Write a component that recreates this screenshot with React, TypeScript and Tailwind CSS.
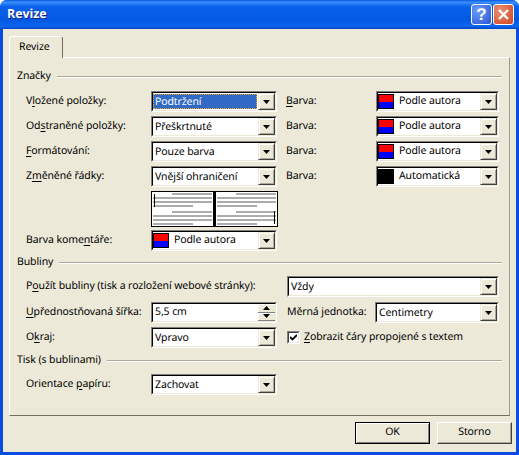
import type { ReactNode } from 'react';

const ArrowButton = () => (
  <div className="w-[17px] h-full flex items-center justify-center bg-[#ece9d8] border border-t-[#ece9d8] border-l-[#ece9d8] border-r-[#404040] border-b-[#404040] shadow-[inset_1px_1px_0_#ffffff,inset_-1px_-1px_0_#aca899]">
    <svg width="7" height="4" viewBox="0 0 7 4" className="block">
      <path d="M0 0h7L3.5 4z" fill="#000" />
    </svg>
  </div>
);

const Field = ({ width, children }: { width: string; children: ReactNode }) => (
  <div className={`${width} h-[21px] shrink-0 flex border border-t-[#808080] border-l-[#808080] border-r-white border-b-white`}>
    <div className="flex-1 min-w-0 flex border border-t-black border-l-black border-r-[#ece9d8] border-b-[#ece9d8] bg-white">
      {children}
    </div>
  </div>
);

const Combo = ({ width, value, focus }: { width: string; value: string; focus?: boolean }) => (
  <Field width={width}>
    <div className="flex-1 min-w-0 pt-px pr-px pb-px">
      <div className={`h-full pl-px leading-[14px] border border-dotted ${focus ? 'bg-[#316ac5] text-white border-[#f5a623]' : 'border-transparent'}`}>
        {value}
      </div>
    </div>
    <ArrowButton />
  </Field>
);

const ColorCombo = ({ width, value, black }: { width: string; value: string; black?: boolean }) => (
  <Field width={width}>
    <div className="flex-1 min-w-0 flex items-center">
      <div className="w-[16px] h-[15px] border border-black flex flex-col shrink-0">
        <div className={`flex-1 ${black ? 'bg-black' : 'bg-[#ff0000]'}`} />
        <div className={`flex-1 ${black ? 'bg-black' : 'bg-[#0000ff]'}`} />
      </div>
      <span className="ml-[5px]">{value}</span>
    </div>
    <ArrowButton />
  </Field>
);

const GroupTitle = ({ title, className }: { title: string; className: string }) => (
  <div className={`flex items-center h-[16px] ${className}`}>
    <span>{title}</span>
    <div className="flex-1 ml-[6px] h-[2px] border-t border-t-[#aca899] border-b border-b-white" />
  </div>
);

const Row = ({ className, children }: { className: string; children: ReactNode }) => (
  <div className={`flex items-center h-[21px] pl-[9px] ${className}`}>{children}</div>
);

const Label = ({ width, before, u, after }: { width: string; before?: string; u?: string; after?: string }) => (
  <div className={`${width} shrink-0 whitespace-nowrap`}>
    {before}
    {u && <span className="underline underline-offset-2">{u}</span>}
    {after}
  </div>
);

const PreviewPane = ({ right }: { right?: boolean }) => (
  <div className="relative flex-1 bg-white px-px pt-px flex flex-col">
    {[0, 1].map((i) => (
      <div key={i} className={`flex flex-col gap-[2px] ${i === 1 ? 'mt-[4px]' : ''}`}>
        <div className="h-[2px] w-[40px] ml-auto bg-[#acacac]" />
        <div className="h-[2px] bg-[#acacac]" />
        <div className="h-[2px] bg-[#acacac]" />
        <div className="h-[2px] w-[40px] bg-[#acacac]" />
      </div>
    ))}
    <div className={`absolute w-[1px] h-[13px] bg-black ${right ? 'right-[2px] bottom-[2px]' : 'left-[2px] top-[2px]'}`} />
  </div>
);

const Revision = () => (
  <>
    <GroupTitle title="Značky" className="" />
    <Row className="mt-[6px]">
      <Label width="w-[125px]" before="V" u="l" after="ožené položky:" />
      <Combo width="w-[126px]" value="Podtržení" focus />
      <Label width="w-[90px] ml-[9px]" u="B" after="arva:" />
      <ColorCombo width="w-[123px]" value="Podle autora" />
    </Row>
    <Row className="mt-[4px]">
      <Label width="w-[125px]" before="Od" u="s" after="traněné položky:" />
      <Combo width="w-[126px]" value="Přeškrtnuté" />
      <Label width="w-[90px] ml-[9px]" before="Barva:" />
      <ColorCombo width="w-[123px]" value="Podle autora" />
    </Row>
    <Row className="mt-[4px]">
      <Label width="w-[125px]" u="F" after="ormátování:" />
      <Combo width="w-[126px]" value="Pouze barva" />
      <Label width="w-[90px] ml-[9px]" before="Barva:" />
      <ColorCombo width="w-[123px]" value="Podle autora" />
    </Row>
    <Row className="mt-[4px]">
      <Label width="w-[125px]" before="Z" u="m" after="ěněné řádky:" />
      <Combo width="w-[126px]" value="Vnější ohraničení" />
      <Label width="w-[90px] ml-[9px]" before="Barva:" />
      <ColorCombo width="w-[123px]" value="Automatická" black />
    </Row>
    <div className="ml-[134px] mt-[4px] w-[127px] h-[36px] bg-black p-px flex gap-[3px]">
      <PreviewPane />
      <PreviewPane right />
    </div>
    <Row className="mt-[3px]">
      <Label width="w-[125px]" before="Barva kome" u="n" after="táře:" />
      <ColorCombo width="w-[126px]" value="Podle autora" />
    </Row>
    <GroupTitle title="Bubliny" className="mt-[4px]" />
    <Row className="mt-[5px]">
      <Label width="w-[261px]" before="P" u="o" after="užít bubliny (tisk a rozložení webové stránky):" />
      <Combo width="w-[212px]" value="Vždy" />
    </Row>
    <Row className="mt-[5px]">
      <Label width="w-[125px]" u="U" after="přednostňovaná šířka:" />
      <Field width="w-[126px]">
        <div className="flex-1 pl-[2px] leading-[16px]">5,5 cm</div>
        <div className="w-[17px] flex flex-col">
          <div className="flex-1 flex items-center justify-center bg-[#ece9d8] border-b border-b-[#808080] shadow-[inset_1px_1px_0_#ffffff]">
            <svg width="7" height="4" viewBox="0 0 7 4"><path d="M3.5 0L7 4H0z" fill="#000" /></svg>
          </div>
          <div className="flex-1 flex items-center justify-center bg-[#ece9d8] border-b border-b-[#808080] shadow-[inset_1px_1px_0_#ffffff]">
            <svg width="7" height="4" viewBox="0 0 7 4"><path d="M0 0h7L3.5 4z" fill="#000" /></svg>
          </div>
        </div>
      </Field>
      <Label width="w-[88px] ml-[10px]" before="Měrná " u="j" after="ednotka:" />
      <Combo width="w-[124px]" value="Centimetry" />
    </Row>
    <Row className="mt-[4px]">
      <Label width="w-[125px]" before="O" u="k" after="raj:" />
      <Combo width="w-[126px]" value="Vpravo" />
      <div className="ml-[10px] w-[13px] h-[13px] shrink-0 border border-t-[#808080] border-l-[#808080] border-r-white border-b-white">
        <div className="w-full h-full bg-white border border-t-[#404040] border-l-[#404040] border-r-[#ece9d8] border-b-[#ece9d8] flex items-center justify-center">
          <svg width="7" height="7" viewBox="0 0 7 7"><path d="M0 3l2.5 2.5L7 1" fill="none" stroke="#000" strokeWidth="1.8" /></svg>
        </div>
      </div>
      <Label width="ml-[4px]" u="Z" after="obrazit čáry propojené s textem" />
    </Row>
    <GroupTitle title="Tisk (s bublinami)" className="mt-[5px]" />
    <Row className="mt-[5px]">
      <Label width="w-[125px]" before="Orientace " u="p" after="apíru:" />
      <Combo width="w-[126px]" value="Zachovat" />
    </Row>
  </>
);

const DialogButton = ({ children, active }: { children: ReactNode; active?: boolean }) => (
  <div className={`w-[75px] h-[22px] flex items-center justify-center bg-[#ece9d8] pb-px ${active ? 'border border-black shadow-[inset_1px_1px_0_#ffffff,inset_-1px_-1px_0_#808080]' : 'border border-t-white border-l-white border-r-[#404040] border-b-[#404040] shadow-[inset_-1px_-1px_0_#aca899]'}`}>
    {children}
  </div>
);

export default function App() {
  return (
    <div className="w-[519px] h-[455px] flex flex-col overflow-hidden rounded-t-[7px] bg-[#0a4be0] text-[10.5px] tracking-[-0.1px] [text-rendering:geometricPrecision] text-black font-['Noto_Sans','Liberation_Sans',sans-serif]">
      <div className="h-[29px] shrink-0 flex items-center pl-[7px] pr-[5px] bg-[linear-gradient(180deg,#0a5be4_0%,#3b8ffb_8%,#0a62ec_22%,#0358e2_70%,#0b66ee_90%,#0047c8_100%)]">
        <span className="text-white font-bold text-[12.5px] font-['Open_Sans',sans-serif] [text-shadow:1px_1px_0_#0f1f7c]">Revize</span>
        <div className="ml-auto flex gap-[1px]">
          <div className="w-[21px] h-[21px] rounded-[3px] border border-white bg-[radial-gradient(circle_at_30%_30%,#6c9cf5,#2a56d6)] flex items-center justify-center text-white font-bold text-[17px] leading-none font-['Liberation_Sans',sans-serif]">?</div>
          <div className="w-[21px] h-[21px] rounded-[3px] border border-white bg-[radial-gradient(circle_at_30%_30%,#eb9072,#d0411d)] flex items-center justify-center">
            <svg width="13" height="13" viewBox="0 0 13 13"><path d="M2 2l9 9M11 2l-9 9" stroke="#fff" strokeWidth="2.4" /></svg>
          </div>
        </div>
      </div>
      <div className="flex-1 mx-[3px] mb-[3px] bg-[#ece9d8] flex flex-col px-[6px]">
        <div className="h-[7px] shrink-0" />
        <div className="w-[54px] h-[22px] shrink-0 -mb-px relative z-10 bg-[#ece9d8] border border-b-0 border-t-white border-l-white border-r-[#716f64] rounded-t-[3px] flex items-center pl-[9px]">Revize</div>
        <div className="h-[359px] shrink-0 border border-t-white border-l-white border-r-[#9d9d92] border-b-[#716f64] pt-[11px] pl-[7px] pr-[7px]">
          <Revision />
        </div>
        <div className="flex justify-end gap-[7px] mt-[6px] -mr-[2px]">
          <DialogButton active>OK</DialogButton>
          <DialogButton>Storno</DialogButton>
        </div>
      </div>
    </div>
  );
}
